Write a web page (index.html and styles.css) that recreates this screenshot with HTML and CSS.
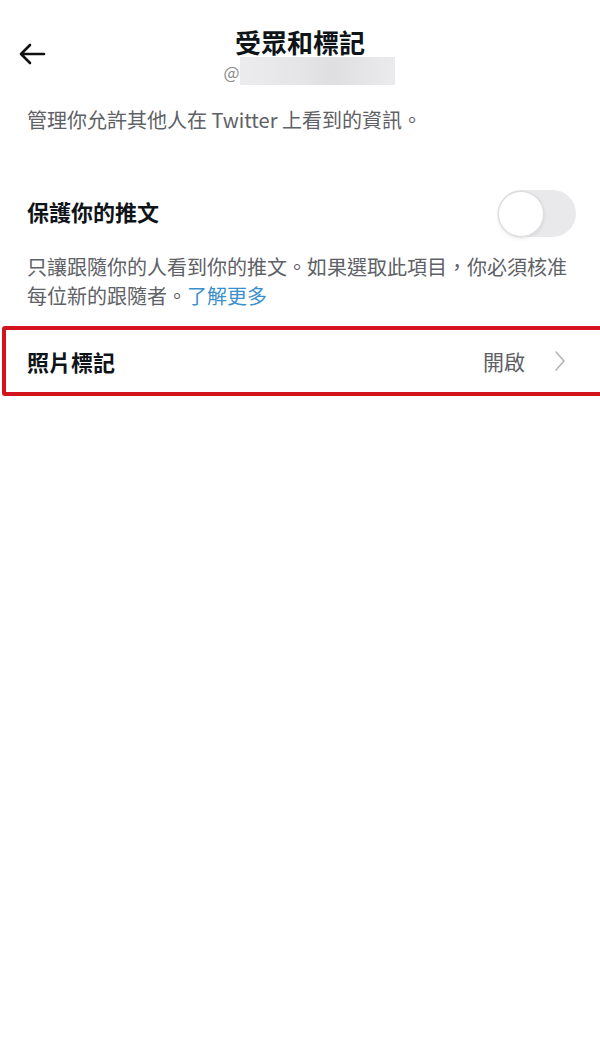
FILE: index.html
```html
<!DOCTYPE html>
<html lang="zh-TW">
<head>
    <meta charset="UTF-8">
    <title>受眾和標記</title>
    <link rel="stylesheet" href="styles.css">
</head>
<body>
    <div class="header">
        <button class="back" aria-label="返回">
            <svg width="28" height="22" viewBox="0 0 28 22">
                <path d="M26 11H3M12 2L3 11l9 9" fill="none" stroke="#111" stroke-width="2.6" stroke-linecap="round" stroke-linejoin="round"/>
            </svg>
        </button>
        <div class="title-box">
            <h1>受眾和標記</h1>
            <div class="handle">@<span class="handle-mask"></span></div>
        </div>
    </div>

    <p class="intro">管理你允許其他人在 Twitter 上看到的資訊。</p>

    <div class="setting">
        <div class="setting-title">保護你的推文</div>
        <div class="toggle"><div class="knob"></div></div>
    </div>
    <p class="setting-desc">只讓跟隨你的人看到你的推文。如果選取此項目，你必須核准每位新的跟隨者。<a href="#">了解更多</a></p>

    <div class="row-wrap">
        <div class="row">
            <div class="row-title">照片標記</div>
            <div class="row-value">開啟</div>
            <svg class="chevron" width="12" height="22" viewBox="0 0 12 22">
                <path d="M2 2l8 9-8 9" fill="none" stroke="#b5b5b8" stroke-width="1.6" stroke-linecap="round" stroke-linejoin="round"/>
            </svg>
        </div>
    </div>
</body>
</html>
```

FILE: styles.css
```css
body {
    margin: 0;
    background-color: #fff;
    font-family: "Noto Sans CJK TC", "Noto Sans", sans-serif;
    color: #0f1419;
    overflow-x: hidden;
}

/* 頂部標題列 */
.header {
    display: grid;
    grid-template-columns: 60px 1fr 60px;
    padding-top: 27px;
}

.back {
    border: none;
    background: none;
    padding: 0 0 0 18px;
    margin-top: 16px;
    height: 22px;
    display: flex;
    align-items: center;
}

.title-box {
    display: flex;
    flex-direction: column;
    align-items: center;
}

h1 {
    margin: 0;
    font-size: 26px;
    line-height: 30px;
    font-weight: 700;
}

.handle {
    display: flex;
    align-items: center;
    height: 28px;
    margin-left: 18px;
    font-size: 17px;
    color: #8a8a8e;
}

.handle-mask {
    display: block;
    width: 155px;
    height: 28px;
    background: linear-gradient(90deg, #ececee 0%, #e5e5e7 40%, #dfdfe1 60%, #ebebed 100%);
}

.intro {
    margin: 20px 0 0;
    padding: 0 27px;
    font-size: 20px;
    line-height: 30px;
    color: #5e6166;
}

/* 保護推文 */
.setting {
    display: flex;
    align-items: center;
    justify-content: space-between;
    margin-top: 55px;
    padding: 0 24px 0 27px;
    height: 47px;
}

.setting-title {
    font-size: 22px;
    font-weight: 700;
    padding-bottom: 5px;
}

.toggle {
    width: 78px;
    height: 47px;
    border-radius: 24px;
    background-color: #e9e9eb;
    display: flex;
    align-items: center;
    padding-left: 1px;
    box-sizing: border-box;
}

.knob {
    width: 44px;
    height: 44px;
    border-radius: 50%;
    background-color: #fff;
    box-shadow: 0 0 0 1.5px #dedee0, 0 2px 5px rgba(0, 0, 0, 0.12);
}

.setting-desc {
    margin: 15px 0 0;
    padding: 0 27px;
    font-size: 20px;
    line-height: 29px;
    color: #5e6166;
}

.setting-desc a {
    color: #3b8fcc;
    text-decoration: none;
}

/* 照片標記 */
.row-wrap {
    margin: 16px -6px 0 2px;
    border: 4px solid #d3141c;
    border-radius: 3px;
}

.row {
    display: flex;
    align-items: center;
    height: 62px;
    padding: 0 36px 0 21px;
}

.row-title {
    flex: 1;
    font-size: 22px;
    font-weight: 700;
}

.row-value {
    font-size: 21px;
    color: #5e6166;
    margin-right: 29px;
}
```
